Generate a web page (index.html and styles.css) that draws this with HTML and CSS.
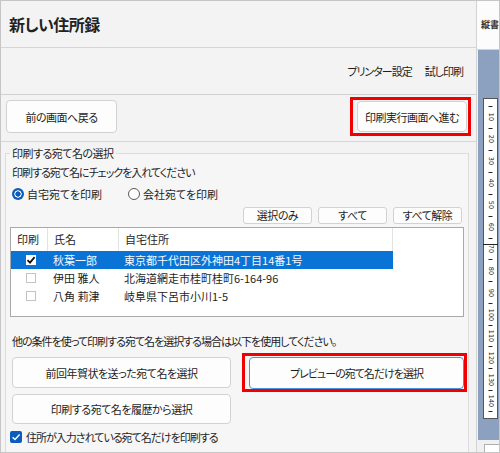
FILE: index.html
```html
<!DOCTYPE html>
<html lang="ja">
<head>
  <meta charset="utf-8">
  <title>新しい住所録</title>
  <link rel="stylesheet" href="styles.css">
</head>
<body>
  <div class="window">
    <div class="main">
      <div class="title-bar">
        <h1>新しい住所録</h1>
      </div>

      <div class="toolbar">
        <a href="#">プリンター設定</a>
        <a href="#">試し印刷</a>
      </div>

      <div class="nav-row">
        <button class="btn btn-back">前の画面へ戻る</button>
        <span class="mark mark-next">
          <button class="btn btn-next">印刷実行画面へ進む</button>
        </span>
      </div>

      <fieldset class="select-group">
        <legend>印刷する宛て名の選択</legend>
        <p class="hint">印刷する宛て名にチェックを入れてください</p>

        <div class="radios">
          <label class="radio radio-home"><span class="radio-dot checked"></span>自宅宛てを印刷</label>
          <label class="radio"><span class="radio-dot"></span>会社宛てを印刷</label>
        </div>

        <div class="list-actions">
          <button class="btn btn-small">選択のみ</button>
          <button class="btn btn-small">すべて</button>
          <button class="btn btn-small">すべて解除</button>
        </div>

        <div class="listbox">
          <div class="list-head">
            <span class="cell">印刷</span>
            <span class="cell">氏名</span>
            <span class="cell">自宅住所</span>
            <span class="cell cell-rest"></span>
          </div>
          <div class="list-row selected">
            <span class="cell cell-check">
              <span class="box checked">
                <svg width="10" height="10" viewBox="0 0 10 10"><path d="M1.5 5.2 L4 7.6 L8.6 2.2" fill="none" stroke="#111" stroke-width="1.8"/></svg>
              </span>
            </span>
            <span class="cell">秋葉一郎</span>
            <span class="cell">東京都千代田区外神田4丁目14番1号</span>
          </div>
          <div class="list-row">
            <span class="cell cell-check"><span class="box"></span></span>
            <span class="cell">伊田 雅人</span>
            <span class="cell">北海道網走市桂町桂町6-164-96</span>
          </div>
          <div class="list-row">
            <span class="cell cell-check"><span class="box"></span></span>
            <span class="cell">八角 莉津</span>
            <span class="cell">岐阜県下呂市小川1-5</span>
          </div>
        </div>

        <p class="note">他の条件を使って印刷する宛て名を選択する場合は以下を使用してください。</p>

        <div class="more">
          <div class="more-left">
            <button class="btn btn-wide">前回年賀状を送った宛て名を選択</button>
            <button class="btn btn-wide btn-history">印刷する宛て名を履歴から選択</button>
          </div>
          <span class="mark mark-preview">
            <button class="btn btn-preview">プレビューの宛て名だけを選択</button>
          </span>
        </div>

        <label class="check-row">
          <span class="check-blue">
            <svg width="12" height="12" viewBox="0 0 12 12"><path d="M2.6 6.2 L5 8.5 L9.6 3.6" fill="none" stroke="#fff" stroke-width="1.4"/></svg>
          </span>
          住所が入力されている宛て名だけを印刷する
        </label>
      </fieldset>
    </div>

    <aside class="ruler-pane">
      <div class="ruler-top">縦書</div>
      <div class="ruler-area">
        <svg class="ruler" width="15" height="321" viewBox="0 0 15 321">
          <rect x="0.5" y="0.5" width="14" height="320" fill="#fff" stroke="#555"/>
          <g stroke="#222" stroke-width="1">
            <line x1="5.5" y1="8.5" x2="9.5" y2="8.5"/>
            <line x1="5.5" y1="30.5" x2="9.5" y2="30.5"/>
            <line x1="5.5" y1="52.5" x2="9.5" y2="52.5"/>
            <line x1="5.5" y1="74.5" x2="9.5" y2="74.5"/>
            <line x1="5.5" y1="96.5" x2="9.5" y2="96.5"/>
            <line x1="5.5" y1="118.5" x2="9.5" y2="118.5"/>
            <line x1="5.5" y1="140.5" x2="9.5" y2="140.5"/>
            <line x1="0" y1="146.5" x2="15" y2="146.5"/>
            <line x1="5.5" y1="161.5" x2="9.5" y2="161.5"/>
            <line x1="5.5" y1="183.5" x2="9.5" y2="183.5"/>
            <line x1="5.5" y1="205.5" x2="9.5" y2="205.5"/>
            <line x1="5.5" y1="227.5" x2="9.5" y2="227.5"/>
            <line x1="5.5" y1="248.5" x2="9.5" y2="248.5"/>
            <line x1="5.5" y1="270.5" x2="9.5" y2="270.5"/>
            <line x1="5.5" y1="292.5" x2="9.5" y2="292.5"/>
            <line x1="5.5" y1="313.5" x2="9.5" y2="313.5"/>
          </g>
          <g class="ruler-num">
            <text x="7.5" y="19" transform="rotate(90 7.5 19)">10</text>
            <text x="7.5" y="41" transform="rotate(90 7.5 41)">20</text>
            <text x="7.5" y="63" transform="rotate(90 7.5 63)">30</text>
            <text x="7.5" y="85" transform="rotate(90 7.5 85)">40</text>
            <text x="7.5" y="107" transform="rotate(90 7.5 107)">50</text>
            <text x="7.5" y="129" transform="rotate(90 7.5 129)">60</text>
            <text x="7.5" y="151" transform="rotate(90 7.5 151)">70</text>
            <text x="7.5" y="173" transform="rotate(90 7.5 173)">80</text>
            <text x="7.5" y="195" transform="rotate(90 7.5 195)">90</text>
            <text x="7.5" y="217" transform="rotate(90 7.5 217)">100</text>
            <text x="7.5" y="238" transform="rotate(90 7.5 238)">110</text>
            <text x="7.5" y="260" transform="rotate(90 7.5 260)">120</text>
            <text x="7.5" y="282" transform="rotate(90 7.5 282)">130</text>
            <text x="7.5" y="303" transform="rotate(90 7.5 303)">140</text>
          </g>
        </svg>
      </div>
      <div class="ruler-bottom"><span class="mini-box"></span></div>
    </aside>
  </div>
</body>
</html>
```

FILE: styles.css
```css
body {
  margin: 0;
  font-family: "Noto Sans CJK JP", "Noto Sans", sans-serif;
  font-size: 11px;
  letter-spacing: -0.5px;
  font-feature-settings: "palt";
  color: #1e1e1e;
}

.window {
  display: flex;
  width: 500px;
  height: 453px;
  box-sizing: border-box;
  border: 1px solid #c6c6c6;
  background: #f3f3f3;
  overflow: hidden;
}

.main {
  width: 475px;
  flex: none;
  border-right: 1px solid #d3d3d3;
  overflow: hidden;
}

/* header */
.title-bar {
  height: 46px;
  border-bottom: 1px solid #d6d6d6;
}

h1 {
  margin: 0;
  padding-left: 8px;
  line-height: 46px;
  font-size: 16px;
  font-weight: bold;
  color: #222;
}

.toolbar {
  display: flex;
  justify-content: flex-end;
  align-items: center;
  gap: 13px;
  height: 46px;
  padding-right: 13px;
  border-bottom: 1px solid #d0d0d0;
  letter-spacing: -1px;
}

.toolbar a {
  color: #1e1e1e;
  text-decoration: none;
}

.nav-row {
  display: flex;
  justify-content: space-between;
  align-items: flex-start;
  height: 41px;
  padding: 5px 5px 0 5px;
  border-bottom: 1px solid #d6d6d6;
}

/* buttons */
.btn {
  display: block;
  margin: 0;
  padding: 0;
  font: inherit;
  letter-spacing: inherit;
  color: #1e1e1e;
  background: #fdfdfd;
  border: 1px solid #d2d2d2;
  border-radius: 4px;
}

.btn-back {
  width: 111px;
  height: 33px;
}

.mark {
  display: block;
  border: 3px solid #f00000;
}

.mark-next {
  margin-top: -3px;
  padding: 1px 1px 1px 4px;
}

.btn-next {
  width: 110px;
  height: 31px;
}

/* group box */
.select-group {
  margin: 4px 7px 0 4px;
  padding: 0 5px 40px 6px;
  border: 1px solid #dcdcdc;
  background: #f6f6f6;
  min-height: 320px;
}

.select-group legend {
  padding: 0 2px;
  margin-left: -2px;
  line-height: 14px;
}

.hint,
.note {
  margin: 0;
  line-height: 14px;
  letter-spacing: -1px;
}

.hint {
  margin-top: 5px;
}

.radios {
  display: flex;
  align-items: center;
  height: 14px;
  margin-top: 8px;
  letter-spacing: 0;
}

.radio {
  display: flex;
  align-items: center;
  gap: 3px;
}

.radio-home {
  width: 116px;
}

.radio-dot {
  width: 12px;
  height: 12px;
  box-sizing: border-box;
  border: 1px solid #5a5a5a;
  border-radius: 50%;
  background: #fff;
}

.radio-dot.checked {
  border: none;
  background: radial-gradient(circle, #0b5cbd 2.4px, #fff 2.9px, #fff 3.4px, #0b5cbd 3.9px);
}

.list-actions {
  display: flex;
  justify-content: flex-end;
  gap: 6px;
  margin-top: 6px;
  padding-right: 1px;
}

.btn-small {
  width: 69px;
  height: 17px;
  line-height: 15px;
  border-radius: 3px;
}

/* list */
.listbox {
  margin: 3px -1px 0 -2px;
  height: 88px;
  border: 1px solid #a9a9a9;
  background: #fff;
  letter-spacing: 0;
}

.list-head,
.list-row {
  display: grid;
  grid-template-columns: 37px 71px 274px 1fr;
}

.list-head {
  height: 23px;
  line-height: 23px;
}

.list-head .cell {
  padding-left: 6px;
  border-right: 1px solid #e3e3e3;
}

.list-head .cell-rest {
  border-right: none;
}

.list-row {
  height: 18px;
  line-height: 18px;
}

.list-row .cell {
  padding-left: 5px;
}

.list-row.selected .cell {
  background: #0a74d6;
  color: #f4f8ff;
}

.cell-check {
  display: flex;
  align-items: center;
  padding-left: 15px !important;
}

.box {
  display: block;
  width: 10px;
  height: 10px;
  box-sizing: border-box;
  border: 1px solid #c4c4c4;
  background: #fff;
}

.box.checked {
  border: none;
}

.box svg {
  display: block;
}

.note {
  margin-top: 17px;
}

/* lower buttons */
.more {
  display: flex;
  justify-content: space-between;
  align-items: flex-start;
  margin-top: 5px;
  margin-right: -4px;
}

.more-left {
  padding-top: 4px;
}

.btn-wide {
  width: 219px;
  height: 31px;
}

.btn-history {
  margin-top: 6px;
  height: 30px;
}

.mark-preview {
  padding: 1px 0 0 4px;
}

.btn-preview {
  width: 215px;
  height: 32px;
  border-color: #4c93de;
  letter-spacing: -1px;
}

.check-row {
  display: flex;
  align-items: center;
  gap: 4px;
  height: 14px;
  margin: 6px 0 0 -2px;
  letter-spacing: -1px;
}

.check-blue {
  width: 12px;
  height: 12px;
  border-radius: 2px;
  background: #0b5cbd;
}

.check-blue svg {
  display: block;
}

/* right pane with the ruler */
.ruler-pane {
  display: flex;
  flex-direction: column;
  width: 22px;
  flex: none;
}

.ruler-top {
  height: 48px;
  padding-left: 4px;
  line-height: 48px;
  font-size: 9px;
  font-weight: bold;
  letter-spacing: 0;
  color: #333;
  white-space: nowrap;
  overflow: hidden;
  background: #fcfcfc;
  border-bottom: 1px solid #d3d3d3;
}

.ruler-area {
  flex: 1;
  background: #8ba1bf;
  border-left: 1px solid #eef1f5;
}

.ruler {
  display: block;
  margin: 48px 0 0 5px;
}

.ruler-num {
  font-family: "DejaVu Sans", sans-serif;
  font-size: 6.5px;
  letter-spacing: 0;
  fill: #222;
  text-anchor: middle;
  dominant-baseline: central;
}

.ruler-bottom {
  height: 12px;
  background: #f0f0f0;
}

.mini-box {
  display: block;
  width: 16px;
  height: 10px;
  margin: 4px 0 0 7px;
  border: 1px solid #b0b0b0;
  background: #fff;
}
```
